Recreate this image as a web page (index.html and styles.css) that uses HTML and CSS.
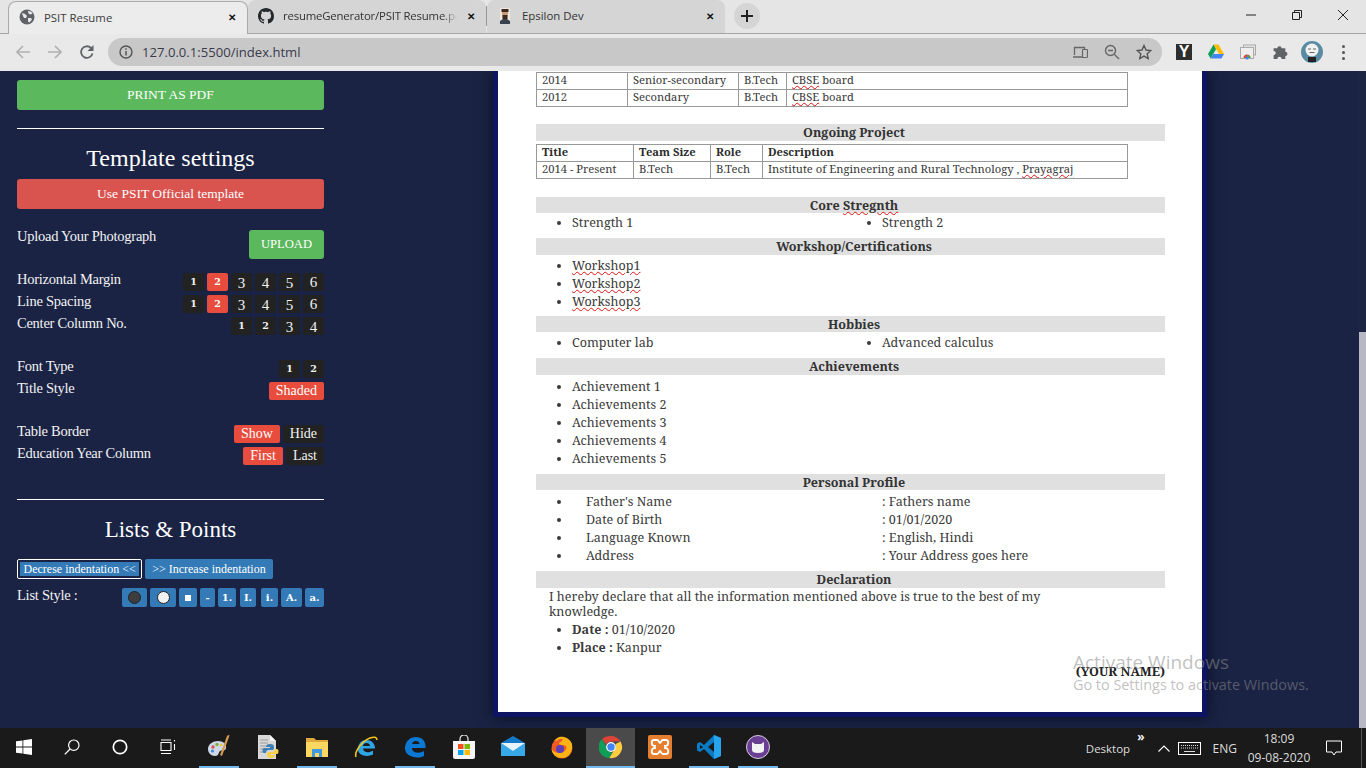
FILE: index.html
```html
<!DOCTYPE html>
<html lang="en">
<head>
    <meta charset="UTF-8">
    <title>PSIT Resume</title>
    <link rel="stylesheet" href="styles.css">
</head>
<body>
    <!-- browser tabs -->
    <div class="tabstrip">
        <div class="tab active">
            <svg class="favicon" viewBox="0 0 16 16"><circle cx="8" cy="8" r="7.5" fill="#5f6368"/><path d="M3 4l3 1 2 2-1 2-2 0-1-2zM9 2l3 .5 1.500 2-2 1-2-1zM9 9l3 0 1 1.500-2.500 3-1.500-1z" fill="#e9e9e9"/></svg>
            <span class="tab-name">PSIT Resume</span>
            <span class="tab-x">✕</span>
        </div>
        <div class="tab">
            <svg class="favicon" viewBox="0 0 16 16"><path fill="#24292e" d="M8 0C3.580 0 0 3.580 0 8c0 3.540 2.290 6.530 5.470 7.590.4.070.55-.17.55-.38 0-.19-.01-.82-.01-1.490-2.010.37-2.530-.49-2.690-.94-.09-.23-.48-.94-.82-1.130-.28-.15-.68-.52-.01-.53.63-.01 1.080.58 1.230.82.72 1.210 1.870.87 2.330.66.070-.52.28-.87.51-1.070-1.780-.2-3.640-.89-3.640-3.950 0-.87.31-1.590.82-2.150-.08-.2-.36-1.020.08-2.120 0 0 .67-.21 2.200.82.64-.18 1.320-.27 2-.27s1.360.09 2 .27c1.530-1.040 2.200-.82 2.200-.82.44 1.100.16 1.920.08 2.120.51.56.82 1.270.82 2.150 0 3.070-1.870 3.750-3.650 3.950.29.25.54.73.54 1.480 0 1.070-.01 1.930-.01 2.200 0 .21.15.46.55.38A8.010 8.010 0 0 0 16 8c0-4.420-3.580-8-8-8z"/></svg>
            <span class="tab-name fade">resumeGenerator/PSIT Resume.pdf</span>
            <span class="tab-x">✕</span>
        </div>
        <div class="tab-sep"></div>
        <div class="tab">
            <svg class="favicon" viewBox="0 0 16 16"><rect x="3" y="0" width="10" height="16" fill="#efe6dc"/><path d="M5 2h6v3l-1 5H6L5 5z" fill="#c79a78"/><path d="M4.500 1h7v3h-7zM5.500 7h5v4h-5z" fill="#3a2a20"/><path d="M3 16v-3l3-2h4l3 2v3z" fill="#39424e"/></svg>
            <span class="tab-name">Epsilon Dev</span>
            <span class="tab-x">✕</span>
        </div>
        <div class="new-tab">
            <svg viewBox="0 0 12 12" width="12" height="12"><path d="M6 0v12M0 6h12" stroke="#222" stroke-width="2"/></svg>
        </div>
        <div class="win-btns">
            <svg viewBox="0 0 10 10" width="10" height="10"><path d="M0 5h10" stroke="#222" fill="none"/></svg>
            <svg viewBox="0 0 10 10" width="10" height="10"><path d="M.5 2.500h7v7h-7zM2.500 2.500v-2h7v7h-2" stroke="#222" fill="none"/></svg>
            <svg viewBox="0 0 10 10" width="10" height="10"><path d="M0 0l10 10M10 0L0 10" stroke="#222" fill="none"/></svg>
        </div>
    </div>

    <!-- address bar -->
    <div class="toolbar">
        <svg class="nav-icon" viewBox="0 0 16 16"><path d="M15 8H2M8 2L2 8l6 6" stroke="#b0b0b0" stroke-width="1.700" fill="none"/></svg>
        <svg class="nav-icon" viewBox="0 0 16 16"><path d="M1 8h13M8 2l6 6-6 6" stroke="#b0b0b0" stroke-width="1.700" fill="none"/></svg>
        <svg class="nav-icon" viewBox="0 0 16 16"><path d="M13.500 9.500A5.800 5.800 0 1 1 12 4" stroke="#5f6368" stroke-width="1.800" fill="none"/><path d="M14.500 1v6h-6z" fill="#5f6368"/></svg>
        <div class="omnibox">
            <svg class="info-icon" viewBox="0 0 14 14"><circle cx="7" cy="7" r="6" stroke="#555" stroke-width="1.400" fill="none"/><path d="M7 6v4.500M7 3.300v1.500" stroke="#555" stroke-width="1.500"/></svg>
            <span class="url">127.0.0.1:5500/index.html</span>
            <svg class="omni-icon" viewBox="0 0 16 16"><path d="M1 13h10M2.500 11V3.500h10V5" stroke="#666" stroke-width="1.300" fill="none"/><rect x="10.500" y="5.500" width="5" height="8" rx=".8" stroke="#666" stroke-width="1.200" fill="none"/></svg>
            <svg class="omni-icon" viewBox="0 0 16 16"><circle cx="6.500" cy="6.500" r="5" stroke="#666" stroke-width="1.400" fill="none"/><path d="M4 6.500h5M10.500 10.500l4.500 4.500" stroke="#666" stroke-width="1.400"/></svg>
            <svg class="omni-icon" viewBox="0 0 16 16"><path d="M8 1.500l2 4.500 4.800.5-3.600 3.200 1 4.800L8 12.100l-4.200 2.400 1-4.800L1.200 6.500 6 6z" stroke="#555" stroke-width="1.400" fill="none"/></svg>
        </div>
        <div class="ext-icons">
            <span class="ext-y">Y</span>
            <svg class="ext" viewBox="0 0 16 15"><path d="M5.500 0h5L16 9.500h-5z" fill="#fbbc04"/><path d="M5.500 0L0 9.500 2.600 14 8 4.700z" fill="#109d58"/><path d="M2.600 14h10.800L16 9.500H5.300z" fill="#4285f4"/></svg>
            <svg class="ext" viewBox="0 0 16 16"><rect x="3.500" y="1" width="12" height="10" fill="#e4e4e4" stroke="#aaa"/><rect x=".5" y="3.500" width="13" height="11" fill="#eee" stroke="#aaa"/><path d="M3.500 14a3.500 3.500 0 0 1 7 0z" fill="#ea4335"/><path d="M7 14V11a3 3 0 0 1 3.500 3z" fill="#34a853"/><circle cx="7" cy="14" r="1.500" fill="#4285f4"/></svg>
            <svg class="ext" viewBox="0 1 14 15"><path d="M1 5h3.500a2 2 0 1 1 4 0H12v3.300a2 2 0 1 1 0 4V15H8.500a2 2 0 1 0-4 0H1v-3.500a2 2 0 1 0 0-4z" fill="#5f6368"/></svg>
            <svg class="avatar" viewBox="0 0 22 22"><circle cx="11" cy="11" r="11" fill="#5a8ba3"/><circle cx="11" cy="9" r="6.500" fill="#f1f1f1"/><path d="M7 8h3M12 8h3M8.500 11.500h5" stroke="#666"/><path d="M7 21v-5h8v5z" fill="#222"/></svg>
            <span class="dots"><i></i><i></i><i></i></span>
        </div>
    </div>

    <div class="page">
        <!-- settings -->
        <div class="sidebar">
            <button class="btn-wide green">PRINT AS PDF</button>
            <hr class="rule">
            <h2 class="side-title">Template settings</h2>
            <button class="btn-wide red">Use PSIT Official template</button>

            <div class="upload-row">
                <span class="label">Upload Your Photograph</span>
                <button class="btn-upload">UPLOAD</button>
            </div>

            <div class="opt-row">
                <span class="label">Horizontal Margin</span>
                <div class="opts">
                    <button class="opt small">1</button><button class="opt small on">2</button><button class="opt low">3</button><button class="opt low">4</button><button class="opt low">5</button><button class="opt">6</button>
                </div>
            </div>
            <div class="opt-row">
                <span class="label">Line Spacing</span>
                <div class="opts">
                    <button class="opt small">1</button><button class="opt small on">2</button><button class="opt low">3</button><button class="opt low">4</button><button class="opt low">5</button><button class="opt">6</button>
                </div>
            </div>
            <div class="opt-row">
                <span class="label">Center Column No.</span>
                <div class="opts">
                    <button class="opt small">1</button><button class="opt small">2</button><button class="opt low">3</button><button class="opt low">4</button>
                </div>
            </div>

            <div class="opt-row group">
                <span class="label">Font Type</span>
                <div class="opts">
                    <button class="opt small">1</button><button class="opt small">2</button>
                </div>
            </div>
            <div class="opt-row">
                <span class="label">Title Style</span>
                <div class="opts">
                    <button class="opt word on">Shaded</button>
                </div>
            </div>

            <div class="opt-row group">
                <span class="label">Table Border</span>
                <div class="opts">
                    <button class="opt word on">Show</button><button class="opt word">Hide</button>
                </div>
            </div>
            <div class="opt-row">
                <span class="label">Education Year Column</span>
                <div class="opts">
                    <button class="opt word on">First</button><button class="opt word">Last</button>
                </div>
            </div>

            <hr class="rule rule-2">
            <h2 class="side-title title-2">Lists &amp; Points</h2>
            <div class="indent-row">
                <button class="btn-indent focus">Decrese indentation &lt;&lt;</button>
                <button class="btn-indent">&gt;&gt; Increase indentation</button>
            </div>
            <div class="list-row">
                <span class="label">List Style :</span>
                <div class="list-opts">
                    <button class="ls"><i class="disc dark"></i></button>
                    <button class="ls"><i class="disc light"></i></button>
                    <button class="ls"><i class="square"></i></button>
                    <button class="ls">-</button>
                    <button class="ls">1.</button>
                    <button class="ls">I.</button>
                    <button class="ls">i.</button>
                    <button class="ls">A.</button>
                    <button class="ls">a.</button>
                </div>
            </div>
        </div>

        <!-- resume preview -->
        <div class="main">
            <div class="paper">
                <table class="grid edu">
                    <tr><td class="c1">2014</td><td class="c2">Senior-secondary</td><td class="c3">B.Tech</td><td><span class="sp">CBSE</span> board</td></tr>
                    <tr><td>2012</td><td>Secondary</td><td>B.Tech</td><td><span class="sp">CBSE</span> board</td></tr>
                </table>

                <div class="bar bar-project">Ongoing Project</div>
                <table class="grid project">
                    <tr><th class="p1">Title</th><th class="p2">Team Size</th><th class="p3">Role</th><th>Description</th></tr>
                    <tr><td>2014 - Present</td><td>B.Tech</td><td>B.Tech</td><td>Institute of Engineering and Rural Technology , <span class="sp">Prayagraj</span></td></tr>
                </table>

                <div class="bar bar-core">Core <span class="sp">Stregnth</span></div>
                <ul class="list cols">
                    <li>Strength 1</li>
                    <li>Strength 2</li>
                </ul>

                <div class="bar bar-work">Workshop/Certifications</div>
                <ul class="list pad">
                    <li><span class="sp">Workshop1</span></li>
                    <li><span class="sp">Workshop2</span></li>
                    <li><span class="sp">Workshop3</span></li>
                </ul>

                <div class="bar bar-hobby">Hobbies</div>
                <ul class="list cols pad">
                    <li>Computer lab</li>
                    <li>Advanced calculus</li>
                </ul>

                <div class="bar bar-achieve">Achievements</div>
                <ul class="list achieve">
                    <li>Achievement 1</li>
                    <li>Achievements 2</li>
                    <li>Achievements 3</li>
                    <li>Achievements 4</li>
                    <li>Achievements 5</li>
                </ul>

                <div class="bar bar-profile">Personal Profile</div>
                <ul class="list profile">
                    <li><span class="pf-key">Father's Name</span><span>: Fathers name</span></li>
                    <li><span class="pf-key">Date of Birth</span><span>: 01/01/2020</span></li>
                    <li><span class="pf-key">Language Known</span><span>: English, Hindi</span></li>
                    <li><span class="pf-key">Address</span><span>: Your Address goes here</span></li>
                </ul>

                <div class="bar bar-decl">Declaration</div>
                <p class="declare">I hereby declare that all the information mentioned above is true to the best of my knowledge.</p>
                <ul class="list">
                    <li><b>Date :</b> 01/10/2020</li>
                    <li><b>Place :</b> Kanpur</li>
                </ul>
                <div class="sign"><b>(YOUR NAME)</b></div>
            </div>
            <div class="scrollbar"><div class="thumb"></div></div>
        </div>

        <!-- windows watermark -->
        <div class="activate">
            <div class="act-1">Activate Windows</div>
            <div class="act-2">Go to Settings to activate Windows.</div>
        </div>
    </div>

    <!-- taskbar -->
    <div class="taskbar">
        <div class="slot sys">
            <svg class="ti" viewBox="0 0 16 16"><path d="M0 2.300l6.500-.9v6.200H0zM7.300 1.300L16 0v7.600H7.300zM0 8.400h6.500v6.200L0 13.700zM7.300 8.400H16V16l-8.700-1.200z" fill="#fff"/></svg>
        </div>
        <div class="slot sys">
            <svg class="ti" viewBox="0 0 16 16"><circle cx="9.800" cy="6.200" r="5.200" stroke="#fff" stroke-width="1.200" fill="none"/><path d="M6 10L.8 15.400" stroke="#fff" stroke-width="1.300"/></svg>
        </div>
        <div class="slot sys">
            <svg class="ti" viewBox="0 0 16 16"><circle cx="8" cy="8" r="6.700" stroke="#fff" stroke-width="1.700" fill="none"/></svg>
        </div>
        <div class="slot sys">
            <svg class="ti" viewBox="0 0 16 16"><path d="M1 3.500h10v8H1zM1 1h10M1 14.500h10M14.500 1v1.500M14.500 5v6" stroke="#fff" fill="none" stroke-width="1.100"/></svg>
        </div>
        <div class="slot first-app open">
            <svg class="ta" viewBox="0 0 24 24"><path d="M1 14c0-5 5-8 10-8s9 3 8 7-4 1-6 3-1 5-5 5-7-3-7-7z" fill="#cfd8e6"/><circle cx="6" cy="12" r="1.700" fill="#d9534f"/><circle cx="10" cy="9.500" r="1.700" fill="#7cb342"/><circle cx="5.500" cy="16" r="1.600" fill="#3d8fd6"/><circle cx="14" cy="10" r="1.300" fill="#f2c037"/><path d="M20 1l2 1-7 19-2-1z" fill="#d29a52"/><path d="M19.500 1l2.500 1 .5-2z" fill="#e9b36c"/></svg>
        </div>
        <div class="slot">
            <svg class="ta" viewBox="0 0 24 24"><path d="M2 0h12l6 6v18H2z" fill="#d8d8d8"/><path d="M14 0l6 6h-6z" fill="#f4f4f4"/><path d="M4 5h8M4 8h8M4 11h6M4 14h5M4 17h5" stroke="#9a9a9a"/><path d="M14 9c-3 0-4 1-4 3h4v1H8c-2 0-2 5 0 5h2c0-2 1-3 3-3h3c2 0 2-1 2-3s-1-3-4-3z" fill="#3e7fb5"/><path d="M15 23c3 0 4-1 4-3h-4v-1h6c2 0 2-5 0-5h-2c0 2-1 3-3 3h-3c-2 0-2 1-2 3s1 3 4 3z" fill="#f7cf4a"/></svg>
        </div>
        <div class="slot open">
            <svg class="ta" viewBox="0 0 24 24"><path d="M1 3h8l2 2h12v17H1z" fill="#e0a93c"/><path d="M1 7h22v15H1z" fill="#fbd661"/><path d="M7 22v-8h10v8h-3v-4h-4v4z" fill="#3f9ade"/></svg>
        </div>
        <div class="slot">
            <svg class="ta" viewBox="0 0 24 24"><path d="M4 14.500C4 8 8 5 12.500 5S21 8 21 13.500H9c0 4 6 5 10 2v4c-6 3-15 1-15-5zM9 11h7c0-4-7-4-7 0z" fill="#2ea6e6"/><path d="M2 22C0 17 8 6 16 3c4-1.500 7-1 7 2" stroke="#f3c21b" stroke-width="1.600" fill="none"/></svg>
        </div>
        <div class="slot open">
            <svg class="ta" viewBox="0 0 24 24"><path d="M2 12C3 5 8 2 13 2c6 0 10 4 9.500 11H9c0 5 7 6 12 3v5C13 25 1 21 2 12zM9 9h7.500c0-4-7-4-7.500 0z" fill="#0b78d3"/></svg>
        </div>
        <div class="slot">
            <svg class="ta" viewBox="0 0 24 24"><path d="M8 7V4a4 4 0 0 1 8 0v3" stroke="#eee" stroke-width="1.200" fill="none"/><path d="M1 6h22v16a2 2 0 0 1-2 2H3a2 2 0 0 1-2-2z" fill="#f5f5f5"/><path d="M6 9h5.500v5H6z" fill="#f25022"/><path d="M12.500 9H18v5h-5.500z" fill="#7fba00"/><path d="M6 15h5.500v5H6z" fill="#00a4ef"/><path d="M12.500 15H18v5h-5.500z" fill="#ffb900"/></svg>
        </div>
        <div class="slot">
            <svg class="ta" viewBox="0 0 24 24"><path d="M0 8l12-7 12 7v13H0z" fill="#1479c9"/><path d="M0 8l12 8 12-8v13H0z" fill="#37a8e8"/><path d="M0 8h24l-12 8z" fill="#e8f4fb"/></svg>
        </div>
        <div class="slot">
            <svg class="ta" viewBox="0 0 24 24"><circle cx="12" cy="13" r="10.500" fill="#ef5a24"/><path d="M22 9c1 7-3 14-10 14S2 18 1.500 14c3 5 13 6 15-1 .5-2-2-3-4-3C10 10 9 9 9 8c2-1 3-2 4-4-3 0-5 0-6 2-2-1-3 0-4 2C6 2 10 1 14 2c4 1 7 4 8 7z" fill="#fcb316"/><circle cx="10" cy="14" r="4" fill="#5a3fb5"/></svg>
        </div>
        <div class="slot current open">
            <svg class="ta" viewBox="0 0 24 24"><path d="M12 1a11 11 0 0 1 9.500 5.500H12a5.500 5.500 0 0 0-5 3L3 4a11 11 0 0 1 9-3z" fill="#db4437"/><path d="M3 4l4.700 8.200a5.500 5.500 0 0 0 5.800 5.200L10.400 23A11 11 0 0 1 3 4z" fill="#0f9d58"/><path d="M21.500 6.500a11 11 0 0 1-11.100 16.500l4.800-8.200A5.500 5.500 0 0 0 16.500 9z" fill="#ffcd40"/><circle cx="12" cy="12" r="4.300" fill="#4285f4" stroke="#fff" stroke-width="1.200"/></svg>
        </div>
        <div class="slot">
            <svg class="ta" viewBox="0 0 24 24"><rect width="24" height="24" rx="2" fill="#e67e30"/><path d="M6 5h3c2 0 2 3 3 3s1-3 3-3h3c3 0 3 5 0 6h-1v2h1c3 1 3 6 0 6h-3c-2 0-2-3-3-3s-1 3-3 3H6c-3 0-3-5 0-6h1v-2H6C3 10 3 5 6 5z" fill="none" stroke="#fff" stroke-width="1.800"/></svg>
        </div>
        <div class="slot open">
            <svg class="ta" viewBox="0 0 24 24"><path d="M17 0l7 3v18l-7 3L7 14l-4 3-3-1.500v-7L3 7l4 3z" fill="#0a7bc4"/><path d="M17 0l7 3v18l-7 3z" fill="#27a5ec"/><path d="M17 7l-6 5 6 5z" fill="#1a1a1a"/><path d="M3 10l3 2-3 2z" fill="#1a1a1a"/></svg>
        </div>
        <div class="slot open">
            <svg class="ta" viewBox="0 0 24 24"><circle cx="12" cy="12" r="11.500" fill="#6a3f93" stroke="#d8cde2"/><path d="M6 7l3 2h6l3-2v8c0 2-2 3-6 3s-6-1-6-3z" fill="#f3f3f3"/></svg>
        </div>
        <div class="tray">
            <span class="tray-text desktop">Desktop</span>
            <span class="chevrons">»</span>
            <svg class="caret" viewBox="0 0 12 7" width="12" height="7"><path d="M.5 6.500L6 1l5.500 5.500" stroke="#fff" stroke-width="1.100" fill="none"/></svg>
            <svg class="keyboard" viewBox="0 0 23 13" width="23" height="13"><rect x=".5" y=".5" width="22" height="12" fill="none" stroke="#fff"/><path d="M3 3.500h17M3 6h17" stroke="#ddd" stroke-dasharray="1 1"/><path d="M6 9.500h11" stroke="#ddd"/></svg>
            <span class="tray-text eng">ENG</span>
            <div class="clock">
                <div>18:09</div>
                <div>09-08-2020</div>
            </div>
            <svg class="notif" viewBox="0 0 16 16" width="16" height="16"><path d="M.5 1h15v11H10l-2 3-2-3H.5z" fill="none" stroke="#fff"/></svg>
            <span class="show-desk"></span>
        </div>
    </div>
</body>
</html>
```

FILE: styles.css
```css
* {
    margin: 0;
    padding: 0;
    box-sizing: border-box;
}

body {
    width: 1366px;
    height: 768px;
    overflow: hidden;
    display: flex;
    flex-direction: column;
    font-family: "Liberation Serif", serif;
    background: #1a2344;
}

button {
    border: none;
    font-family: inherit;
}

/* tabs */
.tabstrip {
    height: 34px;
    flex: none;
    display: flex;
    align-items: flex-end;
    padding-left: 8px;
    background: #e5e5e5;
    border-bottom: 1px solid #a6a6a6;
    font-family: "Open Sans", sans-serif;
}

.tab {
    width: 238px;
    height: 33px;
    display: flex;
    align-items: center;
    padding: 0 7px 2px 8px;
    background: #d5d5d5;
    border-radius: 8px 8px 0 0;
    font-size: 11.4px;
    color: #333;
}

.tab.active {
    width: 240px;
    height: 33px;
    margin-bottom: -1px;
    background: #ececec;
    border: 1px solid #aaa;
    border-bottom: none;
    color: #3c3c3c;
}

.favicon {
    width: 16px;
    height: 16px;
    flex: none;
    margin: 0 9px 0 2px;
}

.tab-name {
    flex: 1;
    overflow: hidden;
    white-space: nowrap;
}

.tab-name.fade {
    letter-spacing: -0.2px;
    -webkit-mask-image: linear-gradient(to right, #000 92%, transparent);
    mask-image: linear-gradient(to right, #000 92%, transparent);
}

.tab-x {
    width: 16px;
    text-align: center;
    margin-left: 6px;
    font-size: 10px;
    font-weight: bold;
    color: #111;
}

.tab-sep {
    width: 1px;
    height: 20px;
    margin: 0 0 7px 0;
    background: #999;
}

.new-tab {
    width: 26px;
    height: 26px;
    margin: 0 0 4px 9px;
    border-radius: 50%;
    background: #d5d5d5;
    display: flex;
    align-items: center;
    justify-content: center;
}

.win-btns {
    margin-left: auto;
    height: 33px;
    display: flex;
    align-items: center;
    gap: 36px;
    padding: 0 18px 4px 0;
}

/* toolbar */
.toolbar {
    height: 37px;
    flex: none;
    display: flex;
    align-items: center;
    padding: 0 0 1px 15px;
    background: #e9e9e9;
}

.nav-icon {
    width: 16px;
    height: 16px;
    margin-right: 16px;
}

.omnibox {
    width: 1054px;
    height: 28px;
    margin-left: -3px;
    display: flex;
    align-items: center;
    padding: 0 10px 0 11px;
    background: #c8c8c8;
    border-radius: 14px;
}

.info-icon {
    width: 14px;
    height: 14px;
    margin-right: 9px;
}

.url {
    flex: 1;
    font-family: "Open Sans", sans-serif;
    font-size: 13.1px;
    color: #3a3a4a;
}

.omni-icon {
    width: 16px;
    height: 16px;
    margin-left: 16px;
}

.ext-icons {
    display: flex;
    align-items: center;
    margin-left: 14px;
}

.ext-y {
    width: 16px;
    height: 16px;
    background: #2e2e2e;
    color: #fff;
    font: bold 16px/16px "Liberation Sans", sans-serif;
    text-align: center;
}

.ext {
    width: 16px;
    height: 16px;
    margin-left: 16px;
}

.avatar {
    width: 22px;
    height: 22px;
    margin-left: 13px;
}

.dots {
    display: flex;
    flex-direction: column;
    gap: 3px;
    margin-left: 19px;
}

.dots i {
    width: 3px;
    height: 3px;
    border-radius: 50%;
    background: #555;
}

/* page */
.page {
    position: relative;
    height: 657px;
    flex: none;
    display: flex;
    overflow: hidden;
    background: #1a2344;
}

.sidebar {
    width: 341px;
    flex: none;
    padding: 9px 17px 0 17px;
    color: #f2f2f2;
}

.btn-wide {
    display: block;
    width: 100%;
    height: 30px;
    padding-bottom: 1px;
    border-radius: 3px;
    color: #fff;
    font-size: 13.5px;
    text-align: center;
}

.green {
    background: #5cb85c;
}

.red {
    background: #d9534f;
}

.rule {
    border: none;
    border-top: 1px solid #fff;
    margin-top: 18px;
}

.side-title {
    font-size: 24px;
    font-weight: normal;
    text-align: center;
    color: #fff;
    line-height: 30px;
    margin: 14px 0 6px;
}

.label {
    font-size: 14.5px;
    letter-spacing: -0.25px;
    line-height: 17px;
    color: #f2f2f2;
}

.upload-row {
    display: flex;
    justify-content: space-between;
    align-items: flex-start;
    margin-top: 21px;
}

.upload-row .label {
    margin-top: -2px;
}

.btn-upload {
    width: 75px;
    height: 29px;
    border-radius: 3px;
    background: #5cb85c;
    color: #fff;
    font-size: 12.6px;
}

.opt-row {
    display: flex;
    justify-content: space-between;
    align-items: flex-start;
    height: 18px;
    margin-top: 4px;
}

.upload-row + .opt-row {
    margin-top: 14px;
}

.opt-row .label {
    margin-top: -2px;
}

.opt-row.group {
    margin-top: 25px;
}

.opts {
    display: flex;
    gap: 3px;
}

.opt {
    min-width: 21px;
    height: 18px;
    background: #222;
    color: #f2f2f2;
    font-size: 15px;
    line-height: 18px;
    border-radius: 2px;
    text-align: center;
}

.opt.small {
    font-family: "DejaVu Serif", serif;
    font-size: 9.5px;
    font-weight: bold;
}

.opt.low {
    padding-top: 3px;
    line-height: 15px;
}

.opt.on {
    background: #e74c3c;
    color: #fff;
}

.opt.word {
    padding: 0 7px;
    font-size: 14px;
}

.rule-2 {
    margin-top: 34px;
}

.title-2 {
    font-size: 23px;
    margin: 15px 0 14px;
}

.indent-row {
    display: flex;
    gap: 3px;
}

.btn-indent {
    height: 20px;
    padding: 0 7px;
    background: #337ab7;
    color: #fff;
    font-size: 12px;
    border-radius: 2px;
}

.btn-indent.focus {
    outline: 2px solid #1a2344;
    outline-offset: -3px;
    box-shadow: inset 0 0 0 1px #fff;
    border: 1px solid #fff;
    padding: 0 5.5px;
}

.list-row {
    display: flex;
    justify-content: space-between;
    align-items: flex-start;
    margin-top: 9px;
}

.list-row .label {
    margin-top: -1px;
}

.list-opts {
    display: flex;
    gap: 3px;
}

.ls {
    width: 18px;
    height: 19px;
    background: #337ab7;
    color: #fff;
    font-family: "DejaVu Serif", serif;
    font-size: 10px;
    font-weight: bold;
    border-radius: 2px;
    display: flex;
    align-items: center;
    justify-content: center;
}

.ls:nth-child(1) { width: 25px; }
.ls:nth-child(2) { width: 26px; }
.ls:nth-child(4) { width: 15px; }
.ls:nth-child(6) { width: 16px; margin-left: 1px; }
.ls:nth-child(7) { width: 17px; margin-left: 2px; }
.ls:nth-child(8) { width: 21px; }
.ls:nth-child(9) { width: 19px; }

.disc {
    width: 13px;
    height: 13px;
    border-radius: 50%;
    border: 1px solid #222;
}

.dark {
    background: #3d3d3d;
}

.light {
    background: #f2f2f2;
}

.square {
    width: 6px;
    height: 6px;
    background: #fff;
}

/* resume */
.main {
    flex: 1;
    display: flex;
    justify-content: space-between;
    padding-left: 152px;
}

.paper {
    width: 714px;
    height: 646px;
    padding: 1px 37px 0 38px;
    background: #fff;
    border: 5px solid #0d1463;
    border-top: none;
    box-shadow: 0 0 14px rgba(5, 8, 25, 0.75);
    font-family: "Noto Serif", "DejaVu Serif", serif;
    font-size: 12.55px;
    color: #3a3a3a;
}

.grid {
    width: 592px;
    border-collapse: collapse;
    table-layout: fixed;
    font-size: 11.2px;
}

.grid td, .grid th {
    height: 17px;
    padding: 0 5px 3px;
    border: 1px solid #999;
    text-align: left;
    white-space: nowrap;
    line-height: 13px;
}

.grid th {
    color: #2c2c2c;
}

.c1 { width: 91px; }
.c2 { width: 111px; }
.c3 { width: 48px; }
.p1 { width: 97px; }
.p2 { width: 77px; }
.p3 { width: 52px; }

.sp {
    text-decoration: underline wavy #e01010 0.7px;
    text-underline-offset: 1px;
}

.bar {
    width: 629px;
    height: 16.5px;
    padding-left: 7px;
    background: #e0e0e0;
    text-align: center;
    font-weight: bold;
    font-size: 12.6px;
    line-height: 17px;
    color: #333;
}

.bar-project { margin-top: 17px; margin-bottom: 3px; }
.bar-core { margin-top: 18px; }
.bar-work { margin-top: 6px; }
.bar-hobby { margin-top: 5px; }
.bar-achieve { margin-top: 6px; }
.bar-profile { margin-top: 6px; }
.bar-decl { margin-top: 6px; }

.list {
    padding-left: 36px;
    padding-top: 1px;
    line-height: 18px;
}

.list.pad {
    padding-top: 2px;
}

.list.achieve {
    padding-top: 3px;
}

.cols {
    display: grid;
    grid-template-columns: 310px 1fr;
}

.profile li > span:first-child {
    display: inline-block;
    width: 310px;
    padding-left: 14px;
}

.profile li {
    white-space: nowrap;
}

.list.profile {
    padding-top: 3px;
}

.declare {
    width: 520px;
    margin: 1px 0 1px 13px;
    line-height: 15px;
}

.sign {
    width: 629px;
    text-align: right;
    margin-top: 6px;
    line-height: 18px;
    color: #222;
}

.scrollbar {
    width: 7px;
    display: flex;
    flex-direction: column;
    justify-content: flex-end;
    background: #1c2542;
}

.thumb {
    height: 396px;
    background: #b8b8c4;
}

.activate {
    position: absolute;
    left: 1073px;
    top: 578px;
    font-family: "Open Sans", sans-serif;
    color: rgba(140, 140, 140, 0.55);
}

.act-1 {
    font-size: 19px;
    line-height: 26px;
}

.act-2 {
    font-size: 14.4px;
    line-height: 20px;
}

/* taskbar */
.taskbar {
    height: 40px;
    flex: none;
    display: flex;
    background: #1a1a1a;
    color: #eee;
}

.slot {
    width: 49px;
    height: 40px;
    display: flex;
    align-items: center;
    justify-content: center;
    border-bottom: 2px solid transparent;
    position: relative;
}

.slot.sys {
    width: 48px;
}

.slot.first-app {
    margin-left: 2px;
}

.slot.open::after {
    content: '';
    position: absolute;
    left: 5px;
    right: 4px;
    bottom: -2px;
    height: 2px;
    background: #76b9ed;
}

.slot.current {
    background: #4a4a4a;
}

.slot.current::after {
    left: 0;
    right: 0;
}

.ti {
    width: 16px;
    height: 16px;
}

.ta {
    width: 24px;
    height: 24px;
}

.tray {
    margin-left: auto;
    display: flex;
    align-items: center;
    font-family: "Open Sans", sans-serif;
    font-size: 12px;
}

.tray-text {
    color: #ddd;
}

.tray-text.desktop {
    font-size: 11.5px;
}

.chevrons {
    align-self: flex-start;
    margin: 3px 13px 0 7px;
    font-size: 12px;
    font-weight: bold;
    line-height: 12px;
}

.keyboard {
    margin: 0 12px 0 8px;
}

.clock {
    width: 70px;
    margin-left: 7px;
    text-align: center;
    line-height: 19px;
    color: #ddd;
}

.notif {
    margin: 0 19px 0 12px;
}

.show-desk {
    width: 1px;
    height: 40px;
    margin-right: 4px;
    background: #555;
}
```
